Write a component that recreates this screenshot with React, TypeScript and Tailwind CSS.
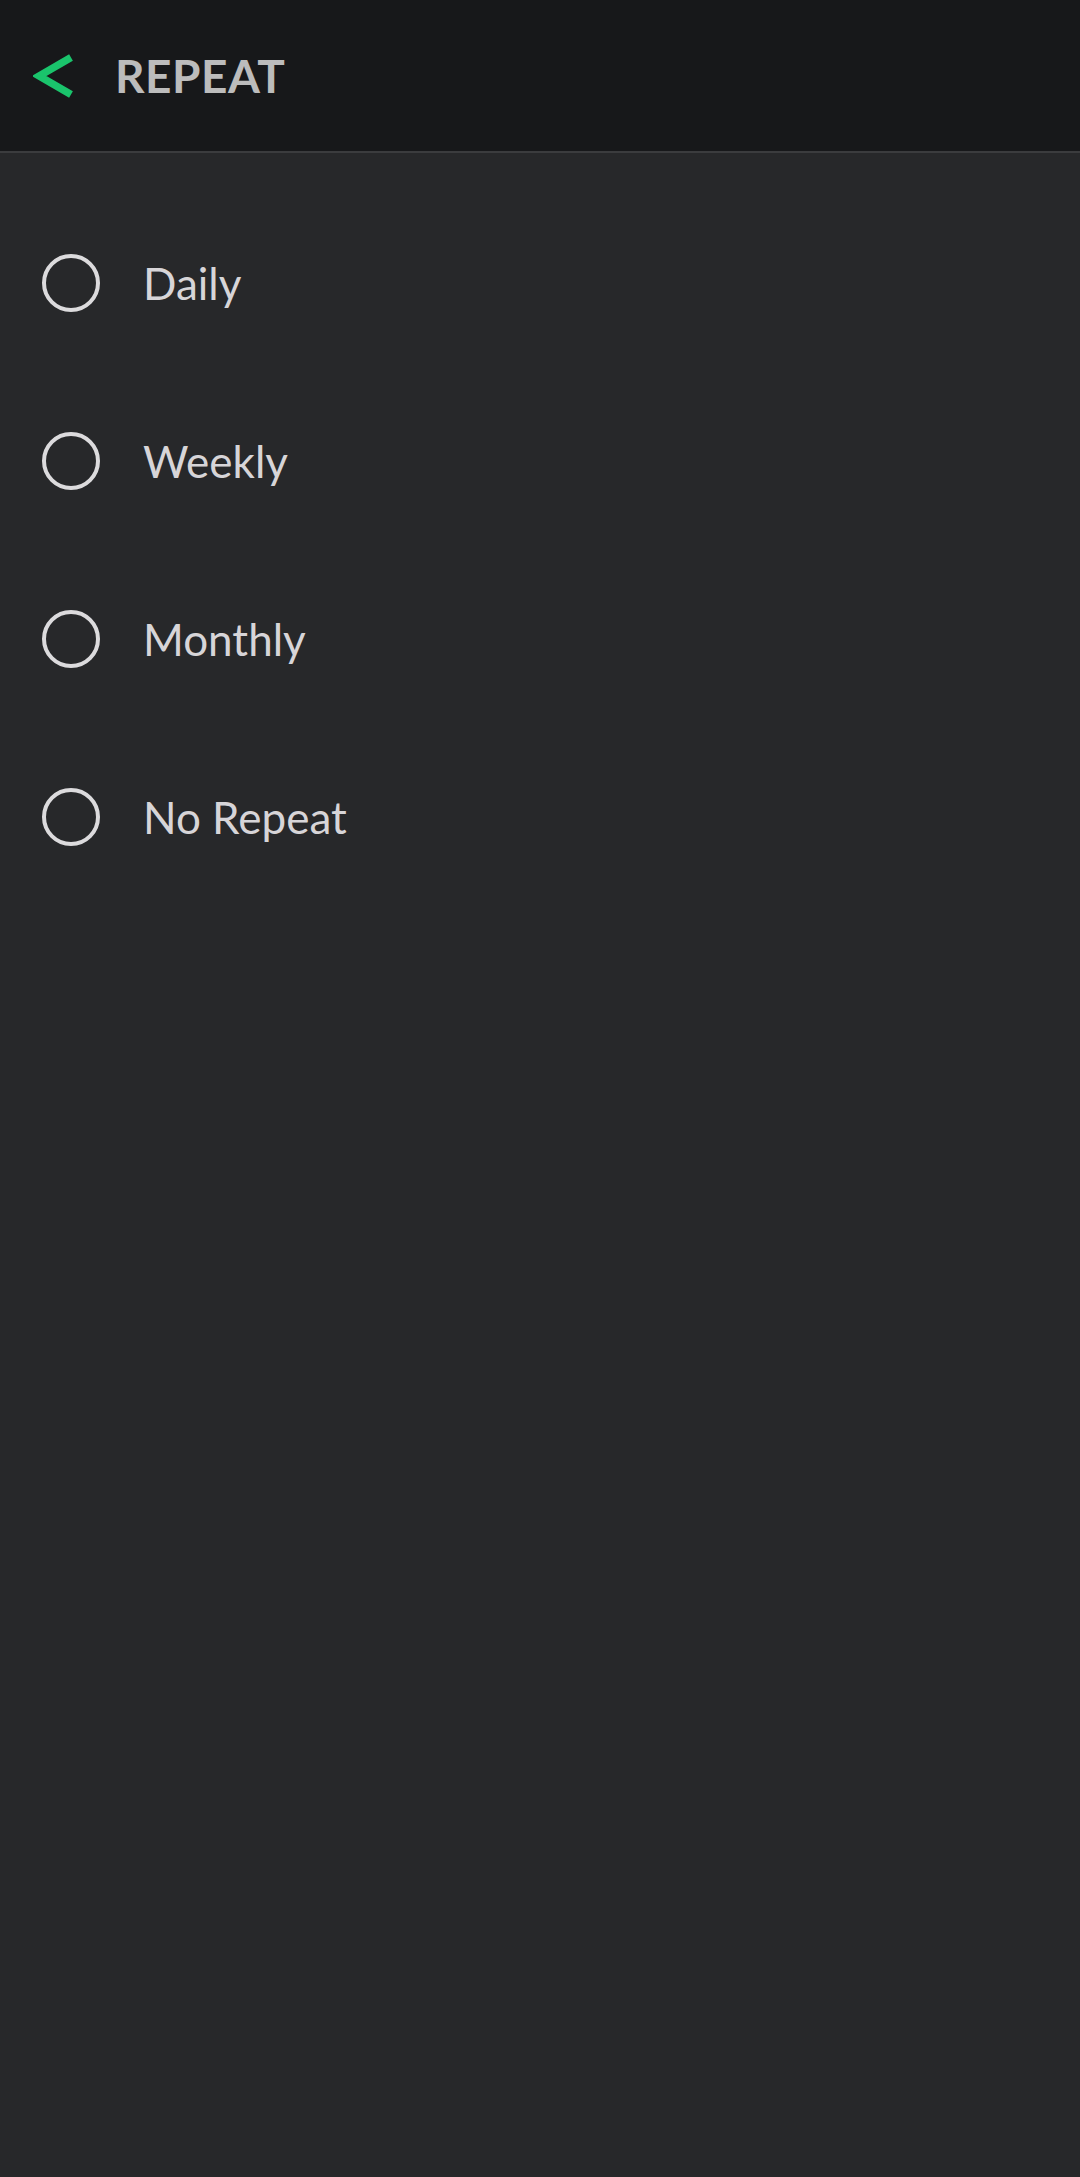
const opcoes = ["Daily", "Weekly", "Monthly", "No Repeat"];

export default function App() {
  return (
    <div className="min-h-[2177px] bg-[#27282a] font-['Lato','Noto_Sans',sans-serif]">
      {/* Header */}
      <div className="h-[153px] bg-[#17181a] border-b-2 border-[#3b3c3e] flex items-center">
        <svg className="ml-[33px] w-[40px] h-[44px]" viewBox="0 0 40 44" fill="none">
          <path d="M38 3.5 L6 22 L38 40.5" stroke="#1ac46c" strokeWidth={7.5} strokeLinejoin="miter" />
        </svg>
        <h1 className="ml-[42px] text-[46px] font-bold tracking-[0.5px] text-[#bcbcbc] leading-none">
          REPEAT
        </h1>
      </div>

      {/* Options */}
      <div className="pt-[41px]">
        {opcoes.map((opcao) => (
          <div key={opcao} className="h-[178px] flex items-center">
            <div className="ml-[42px] w-[58px] h-[58px] rounded-full border-[4px] border-[#dcdbdd]"></div>
            <span className="ml-[43px] text-[44px] text-[#d7d5d8] leading-none">{opcao}</span>
          </div>
        ))}
      </div>
    </div>
  );
}
